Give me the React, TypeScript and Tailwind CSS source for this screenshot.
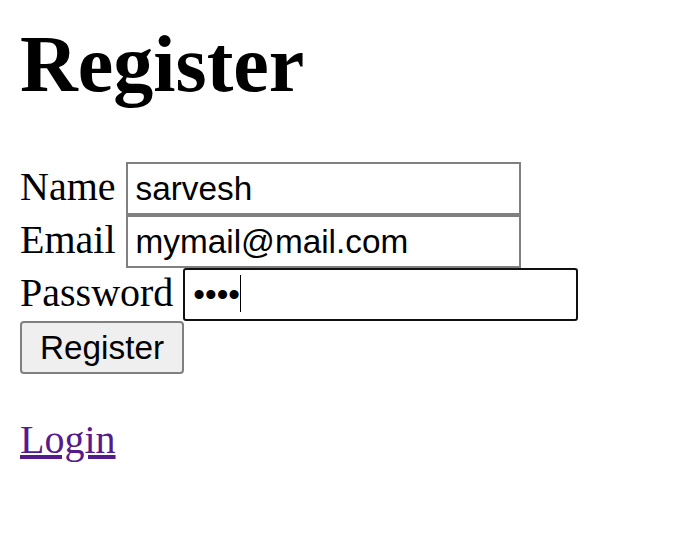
import React from "react";

export default function App() {
  const serif = { fontFamily: '"Liberation Serif", "Times New Roman", serif' };
  const sans = { fontFamily: '"Liberation Sans", Arial, sans-serif' };
  return (
    <div className="bg-white min-h-[539px] p-[20px] pt-[19px] text-black" style={serif}>
      <h1 className="text-[80px] font-bold leading-[normal] mb-[52px]" style={serif}>
        Register
      </h1>
      <form className="flex flex-col items-start text-[40px] leading-[normal]">
        <div className="flex items-baseline gap-[10px] h-[53px]">
          <label>Name</label>
          <input
            readOnly
            value="sarvesh"
            className="w-[395px] h-[53px] border-[2px] border-[#808080] pl-[8px] pr-[5px] py-[2.5px] text-[33.33px] bg-white text-black outline-none"
            style={sans}
          />
        </div>
        <div className="flex items-baseline gap-[10px] h-[53px]">
          <label>Email</label>
          <input
            readOnly
            value="mymail@mail.com"
            className="w-[395px] h-[53px] border-[2px] border-[#808080] pl-[8px] pr-[5px] py-[2.5px] text-[33.33px] bg-white text-black outline-none"
            style={sans}
          />
        </div>
        <div className="flex items-baseline gap-[10px] h-[53px]">
          <label>Password</label>
          <div className="relative">
            <input
              readOnly
              type="password"
              value="abcd"
              className="w-[395px] h-[53px] border-[2.5px] border-[#101010] rounded-[3px] pl-[8px] pr-[5px] py-[2.5px] text-[33.33px] bg-white text-black outline-none"
              style={sans}
            />
            <span className="absolute left-[57px] top-[7px] w-[1px] h-[37px] bg-black" />
          </div>
        </div>
        <button
          type="button"
          className="h-[53px] w-[164px] border-[2px] border-[#808080] rounded-[4px] bg-[#efefef] py-[2.5px] text-[33.33px] leading-[normal] text-black"
          style={sans}
        >
          Register
        </button>
      </form>
      <p className="mt-[42px] text-[40px] leading-[normal]">
        <a href="#" className="text-[#551a8b] underline">
          Login
        </a>
      </p>
    </div>
  );
}
